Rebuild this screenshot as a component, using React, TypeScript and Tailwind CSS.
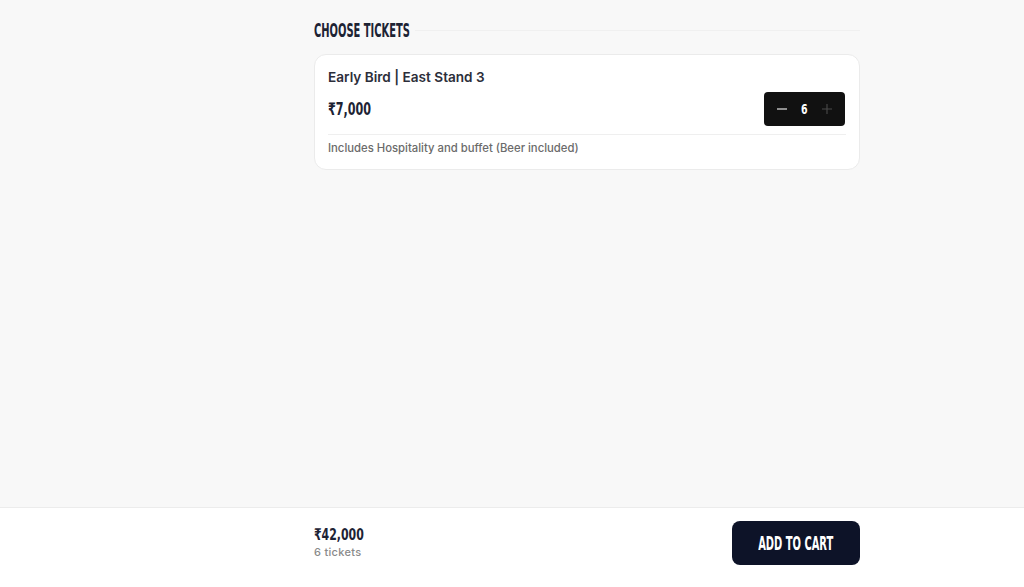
import React from "react";

const cond = { fontFamily: '"DejaVu Sans Condensed", "DejaVu Sans", sans-serif' };

export default function App() {
  return (
    <div className="h-screen w-full flex flex-col bg-[#f8f8f8] font-['Inter','Noto_Sans',sans-serif]">
      <div className="flex-1 flex">
        <div className="w-[314px] shrink-0" />
        <div className="w-[546px] pt-[19px]">
          <div className="flex items-center gap-[6px] h-[22px]">
            <div className="w-[95px] h-[22px] whitespace-nowrap overflow-visible">
              <span style={cond} className="inline-block origin-left scale-x-[0.58] text-[19px] font-bold text-[#1d2334] leading-[22px]">CHOOSE TICKETS</span>
            </div>
            <div className="flex-1 h-px bg-[#f0f0f0]" />
          </div>
          <div className="mt-[13px] rounded-[12px] border border-[#ebebeb] bg-white px-[13px] pt-[13px] pb-[14px]">
            <div className="text-[13.6px] font-semibold text-[#2c2e3a] leading-[18px]">Early Bird | East Stand 3</div>
            <div className="mt-[6px] flex items-center justify-between">
              <div className="w-[44px] whitespace-nowrap">
                <span style={cond} className="inline-block origin-left scale-x-[0.73] text-[17px] font-bold text-[#1d2334] leading-[24px]">₹7,000</span>
              </div>
              <div className="flex items-center h-[34px] w-[81px] rounded-[4px] bg-[#111111] justify-between px-[12px] mr-px">
                <svg width="12" height="12" viewBox="0 0 12 12"><path d="M1 6h10" stroke="#d4d4d4" strokeWidth="1.3" /></svg>
                <span style={cond} className="inline-block scale-x-[0.75] text-[14px] font-bold text-white">6</span>
                <svg width="12" height="12" viewBox="0 0 12 12"><path d="M1 6h10M6 1v10" stroke="#4a4a4a" strokeWidth="1.1" /></svg>
              </div>
            </div>
            <div className="mt-[8px] h-px bg-[#efefef]" />
            <div className="mt-[6px] text-[11.3px] font-medium text-[#6b6b6b] leading-[14px]">Includes Hospitality and buffet (Beer included)</div>
          </div>
        </div>
      </div>
      <div className="h-[80px] shrink-0 border-t border-[#ececec] bg-white flex">
        <div className="w-[314px] shrink-0" />
        <div className="w-[546px] flex items-start justify-between pt-[13px]">
          <div className="flex flex-col pt-[1px]">
            <div className="w-[50px] whitespace-nowrap h-[20px]">
              <span style={cond} className="inline-block origin-left scale-x-[0.76] text-[16px] font-bold text-[#1d2334] leading-[20px]">₹42,000</span>
            </div>
            <div className="mt-[3px] text-[11px] font-medium text-[#8a8a8a] leading-[14px] tracking-[0.3px]">6 tickets</div>
          </div>
          <button className="h-[44px] w-[128px] rounded-[8px] bg-[#0d1328] text-white flex items-center justify-center whitespace-nowrap">
            <span style={cond} className="inline-block scale-x-[0.58] text-[19px] font-bold leading-[22px]">ADD TO CART</span>
          </button>
        </div>
      </div>
    </div>
  );
}
